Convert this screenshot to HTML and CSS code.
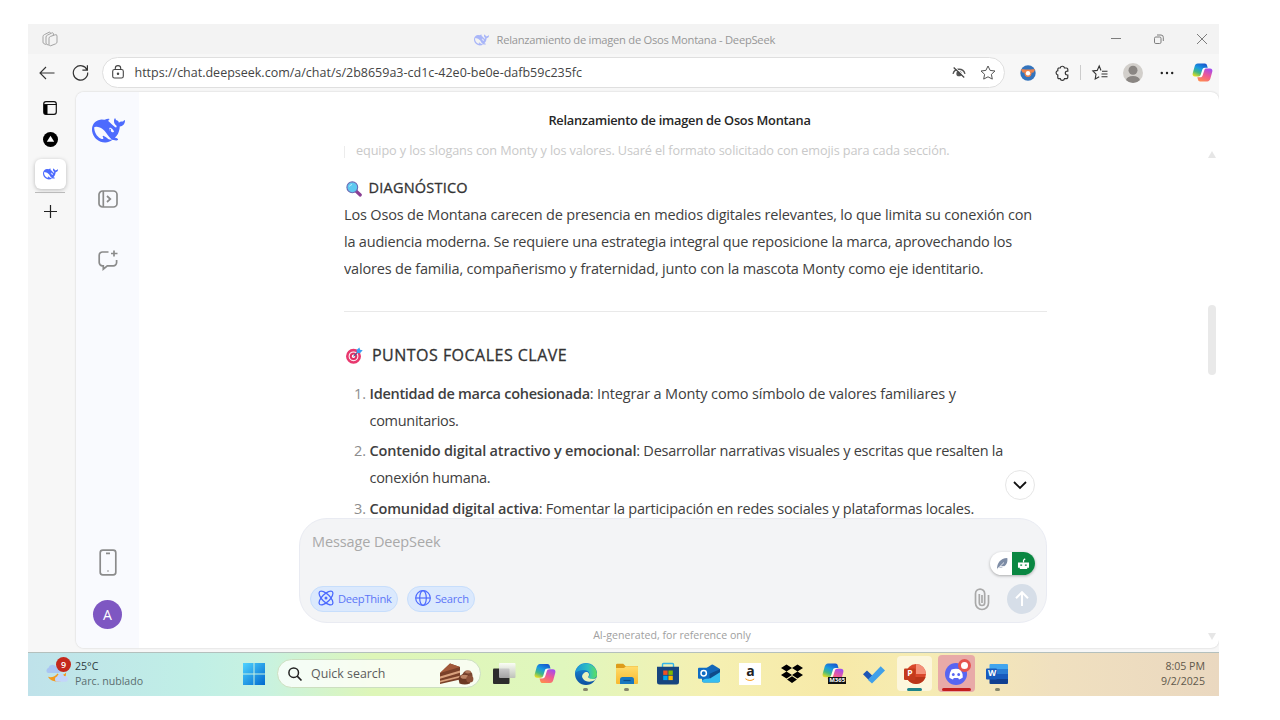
FILE: index.html
```html
<!DOCTYPE html>
<html lang="es">
<head>
<meta charset="utf-8">
<title>Relanzamiento de imagen de Osos Montana - DeepSeek</title>
<link rel="stylesheet" href="styles.css">
</head>
<body>
<svg class="defs" aria-hidden="true">
  <defs>
    <linearGradient id="cpBlue" x1=".7" y1="0" x2=".2" y2="1"><stop offset="0" stop-color="#1759cf"/><stop offset=".4" stop-color="#1a9be0"/><stop offset=".7" stop-color="#42b883"/><stop offset="1" stop-color="#e6dc20"/></linearGradient>
    <linearGradient id="cpPink" x1=".8" y1="0" x2=".3" y2="1"><stop offset="0" stop-color="#a04cf2"/><stop offset=".5" stop-color="#ee5a94"/><stop offset="1" stop-color="#ff8a50"/></linearGradient>
    <linearGradient id="win" x1="0" y1="0" x2="1" y2="1"><stop offset="0" stop-color="#4fd3ff"/><stop offset="1" stop-color="#0069cf"/></linearGradient>
    <linearGradient id="edgeA" x1="0" y1="0" x2="1" y2="0"><stop offset="0" stop-color="#1a94d8"/><stop offset=".6" stop-color="#2fc0c0"/><stop offset="1" stop-color="#5ee05a"/></linearGradient>
    <linearGradient id="edgeB" x1="0" y1="0" x2="0" y2="1"><stop offset="0" stop-color="#1c8fdc"/><stop offset="1" stop-color="#0c4fa0"/></linearGradient>
    <linearGradient id="folder" x1="0" y1="0" x2="0" y2="1"><stop offset="0" stop-color="#ffdc6c"/><stop offset="1" stop-color="#f9b92e"/></linearGradient>
    <linearGradient id="tvw" x1="0" y1="0" x2="0" y2="1"><stop offset="0" stop-color="#fff"/><stop offset="1" stop-color="#b8b8b8"/></linearGradient>
  </defs>
  <symbol id="whale" viewBox="0 3 24 18"><path fill-rule="evenodd" d="M23.748 4.482c-.254-.124-.364.113-.512.234-.051.039-.094.09-.137.136-.372.397-.806.657-1.373.626-.829-.046-1.537.214-2.163.848-.133-.782-.575-1.248-1.247-1.548-.352-.156-.708-.311-.955-.65-.172-.241-.219-.51-.305-.774-.055-.16-.11-.323-.293-.35-.2-.031-.278.136-.356.276-.313.572-.434 1.202-.422 1.84.027 1.436.633 2.58 1.838 3.393.137.093.172.187.129.323-.082.28-.18.552-.266.833-.055.179-.137.217-.329.14a5.526 5.526 0 01-1.736-1.18c-.857-.828-1.631-1.742-2.597-2.458a11.365 11.365 0 00-.689-.471c-.985-.957.13-1.743.388-1.836.27-.098.093-.432-.779-.428-.872.004-1.67.295-2.687.684a3.055 3.055 0 01-.465.137 9.597 9.597 0 00-2.883-.102c-1.885.21-3.39 1.102-4.497 2.623C.082 8.606-.231 10.684.152 12.85c.403 2.284 1.569 4.175 3.36 5.653 1.858 1.533 3.997 2.284 6.438 2.14 1.482-.085 3.133-.284 4.994-1.86.47.234.962.327 1.78.397.63.059 1.236-.03 1.705-.128.735-.156.684-.837.419-.961-2.155-1.004-1.682-.595-2.113-.926 1.096-1.296 2.746-2.642 3.392-7.003.05-.347.007-.565 0-.845-.004-.17.035-.237.23-.256a4.173 4.173 0 001.545-.475c1.396-.763 1.96-2.015 2.093-3.517.02-.23-.004-.467-.247-.588zM11.581 18c-2.089-1.642-3.102-2.183-3.52-2.16-.392.024-.321.471-.235.763.09.288.207.486.371.739.114.167.192.416-.113.603-.673.416-1.842-.14-1.897-.167-1.361-.802-2.5-1.86-3.301-3.307-.774-1.393-1.224-2.887-1.298-4.482-.02-.386.093-.522.477-.592a4.696 4.696 0 011.529-.039c2.132.312 3.946 1.265 5.468 2.774.868.86 1.525 1.887 2.202 2.891.72 1.066 1.494 2.082 2.48 2.914.348.292.625.514.891.677-.802.09-2.14.11-3.054-.614zm1-6.44a.306.306 0 01.415-.287.302.302 0 01.2.288.306.306 0 01-.31.307.303.303 0 01-.304-.308zm3.11 1.596c-.2.081-.399.151-.59.16a1.245 1.245 0 01-.798-.254c-.274-.23-.47-.358-.552-.758a1.73 1.73 0 01.016-.588c.07-.327-.008-.537-.239-.727-.187-.156-.426-.199-.688-.199a.559.559 0 01-.254-.078c-.11-.054-.2-.19-.114-.358.028-.054.16-.186.192-.21.356-.202.767-.136 1.146.016.352.144.618.408 1.001.782.391.451.462.576.685.914.176.265.336.537.445.848.067.195-.019.354-.25.452z"/></symbol>
  <symbol id="copilot" viewBox="0 0 22 20"><path fill="#fff" opacity=".8" d="M9 5h7l-3 10H6z"/><path fill="url(#cpPink)" d="M16 19.500H8.500c-1.300 0-1.900-.8-2.200-1.800L5.500 15h3c1.600 0 2.300-.8 2.800-2.400l1.500-4.800c.4-1.300 1-2 2.400-2h3.600c2.200 0 3 1.500 2.500 3.400l-2 7.200c-.5 1.700-1.600 3.100-3.300 3.100z"/><path fill="url(#cpBlue)" d="M6 .5h7.500c1.300 0 1.900.8 2.200 1.800l.8 2.700h-3c-1.600 0-2.300.8-2.800 2.400l-1.500 4.800c-.4 1.300-1 2-2.400 2H3.200c-2.200 0-3-1.500-2.500-3.400l2-7.200C3.200 1.900 4.300.5 6 .5z"/></symbol>
</svg>

<div class="window">
  <header class="titlebar">
    <svg class="i-tabs" viewBox="0 0 16 16"><g fill="#f3f3f3" stroke="#a3a3a3" stroke-width="1"><path d="M1 5.500a2 2 0 0 1 1.300-1.800L7 1.300a1 1 0 0 1 1.500 1v7l-5 4.200L2 12.600a1.500 1.500 0 0 1-1-1.500z"/><path d="M4 6a2 2 0 0 1 1.300-1.800L9.800 2a1 1 0 0 1 1.600 1v7.500l-5 3.500-1.400-.5a1.500 1.500 0 0 1-1-1.500z"/><path d="M7 7.200A2 2 0 0 1 8.300 5.500l4.800-1.700a1.400 1.400 0 0 1 1.900 1.300v6a2 2 0 0 1-1.300 1.700l-4.800 1.900A1.400 1.400 0 0 1 7 13.300z"/></g></svg>
    <div class="tab-title"><svg class="fav"><use href="#whale"/></svg><span>Relanzamiento de imagen de Osos Montana - DeepSeek</span></div>
    <div class="win-btns">
      <svg viewBox="0 0 12 12"><path d="M1 5.500h10"/></svg>
      <svg viewBox="0 0 12 12"><rect x="1.500" y="4" width="6.500" height="6.500" rx="1.300"/><path d="M4 2h4a2.300 2.300 0 0 1 2.300 2.300V8"/></svg>
      <svg viewBox="0 0 12 12"><path d="M1 1l10 10M11 1L1 11"/></svg>
    </div>
  </header>

  <div class="toolbar">
    <svg class="i-back" viewBox="0 0 16 14"><path d="M15.500 7H1M7 1L1 7l6 6"/></svg>
    <svg class="i-reload" viewBox="0 0 17 17"><path d="M15.200 6.200A7.200 7.200 0 1 0 15.700 8.500M15.400 1.200v5h-5"/></svg>
    <div class="address">
      <svg class="i-lock" viewBox="0 0 12 14"><rect x=".7" y="4.500" width="10.600" height="8.500" rx="1.800"/><path d="M3.300 4.500V3.300a2.700 2.700 0 0 1 5.400 0v1.200"/><circle cx="6" cy="8.800" r=".7" fill="#444"/></svg>
      <span class="url">https://chat.deepseek.com/a/chat/s/2b8659a3-cd1c-42e0-be0e-dafb59c235fc</span>
      <svg class="i-eye" viewBox="0 0 15 12"><path d="M1 7.500c1-3.700 3.500-5 6.500-5s5.500 1.300 6.500 5" fill="none" stroke="#555" stroke-width="1.500"/><circle cx="7.500" cy="7.300" r="2.900" fill="#555"/><path d="M3.300.7l10.500 10" stroke="#fff" stroke-width="1.200"/><path d="M1.700.5l11.500 11" stroke="#444" stroke-width="1.300"/></svg>
      <svg class="i-star" viewBox="0 0 16 15"><path d="M8 1l2.100 4.400 4.900.6-3.600 3.300.9 4.800L8 11.800l-4.300 2.300.9-4.800L1 6l4.900-.6z" fill="none" stroke="#555" stroke-linejoin="round"/></svg>
    </div>
    <svg class="i-ext" viewBox="0 0 16 16"><circle cx="8" cy="8" r="7.700" fill="#3474bd"/><path d="M.8 4.500C3 3.700 5 4.600 8 4.600s5-.9 7.200-.1l-2 3.300-1.700-.2a3.600 3.600 0 1 1-7 0l-1.700.2z" fill="#f0854c"/><circle cx="8" cy="8.200" r="2.200" fill="#fff"/></svg>
    <svg class="i-puzzle" viewBox="0 0 15 16"><path d="M3.500 3h1.700a2.200 2.200 0 0 1 4.300 0h1.800a1.500 1.500 0 0 1 1.500 1.500v1.700h-.6a1.900 1.900 0 0 0 0 3.800h.6v2.200a1.500 1.500 0 0 1-1.500 1.500H9.500a2.200 2.200 0 0 1-4.300 0H3.500A1.500 1.500 0 0 1 2.800 12v-2a2.200 2.200 0 0 1 0-4.300V4.500A1.500 1.500 0 0 1 3.500 3z" fill="none" stroke="#333" stroke-width="1.200"/></svg>
    <i class="sep"></i>
    <svg class="i-favs" viewBox="0 0 16 15"><path d="M9 5.500L7.200 1 5.200 5.400.8 6l3.200 3.200-.8 4.800 4-2.200M10 6.300h5.500M9.500 9h6M9.500 11.700h6" fill="none" stroke="#333" stroke-width="1.100"/></svg>
    <svg class="i-user" viewBox="0 0 20 20"><clipPath id="uc"><circle cx="10" cy="10" r="10"/></clipPath><g clip-path="url(#uc)"><rect width="20" height="20" fill="#d2cfcb"/><circle cx="10" cy="7.300" r="4.500" fill="#8a8683"/><ellipse cx="10" cy="17.500" rx="7" ry="4.500" fill="#8a8683"/></g></svg>
    <svg class="i-dots" viewBox="0 0 14 4"><circle cx="1.800" cy="2" r="1.200"/><circle cx="7" cy="2" r="1.200"/><circle cx="12.200" cy="2" r="1.200"/></svg>
    <svg class="i-copilot"><use href="#copilot"/></svg>
  </div>

  <div class="body">
    <nav class="vtabs">
      <svg class="v-panel" viewBox="0 0 14 14"><rect x=".7" y=".7" width="12.600" height="12.600" rx="2.300" fill="none" stroke="#111" stroke-width="1.200"/><path d="M1 3.500h12.500" stroke="#111"/><path d="M1 4h3.500v9.300H2.500A1.500 1.500 0 0 1 1 12z"/></svg>
      <svg class="v-tri" viewBox="0 0 15 15"><circle cx="7.500" cy="7.500" r="7.500"/><path d="M7.500 3.800l3.700 6H3.800z" fill="#fff"/></svg>
      <div class="v-active"><svg><use href="#whale"/></svg></div>
      <i class="v-line"></i>
      <svg class="v-plus" viewBox="0 0 13 13"><path d="M6.500 0v13M0 6.500h13" stroke="#222" stroke-width="1.200"/></svg>
    </nav>

    <div class="page">
      <aside class="side">
        <svg class="s-logo"><use href="#whale"/></svg>
        <svg class="s-open" viewBox="0 0 20 18"><rect x="1" y="1" width="18" height="16" rx="3.600"/><path d="M5.300 1v16M9 6l3.300 3L9 12"/></svg>
        <svg class="s-new" viewBox="0 0 20 20"><path d="M10.500 2H4.500A3.300 3.300 0 0 0 1.200 5.300v7.200a3.300 3.300 0 0 0 3.300 3.300h.8v3.400l4-3.400h6a3.300 3.300 0 0 0 3.300-3.300V10M16 .5v6M13 3.500h6.500"/></svg>
        <svg class="s-phone" viewBox="0 0 18 27"><rect x="1.200" y="1.200" width="15.600" height="24.600" rx="2.600"/><path d="M7 4.300h4M8.400 22h1.200"/></svg>
        <div class="avatar">A</div>
      </aside>

      <main class="chat">
        <h1>Relanzamiento de imagen de Osos Montana</h1>
        <section class="thread">
          <p class="quote"><span class="t-quote">equipo y los slogans con Monty y los valores. Usaré el formato solicitado con emojis para cada sección.</span></p>
          <h4><svg class="e-lens" viewBox="0 0 16 16"><path d="M10 10l4.300 4" stroke="#8b3f93" stroke-width="3.200" stroke-linecap="round"/><circle cx="6.300" cy="6.300" r="5.400" fill="#5fc9f0" stroke="#6a6ab4" stroke-width="1.100"/><path d="M3.500 5.500a3 3 0 0 1 2.500-2" stroke="#c4f0ff" fill="none"/></svg><span>DIAGNÓSTICO</span></h4>
          <p class="para"><span class="p1">Los Osos de Montana carecen de presencia en medios digitales relevantes, lo que limita su conexión con</span><br><span class="p2">la audiencia moderna. Se requiere una estrategia integral que reposicione la marca, aprovechando los</span><br><span class="p3">valores de familia, compañerismo y fraternidad, junto con la mascota Monty como eje identitario.</span></p>
          <hr>
          <h3><svg class="e-target" viewBox="0 0 17 17"><circle cx="7.500" cy="9.300" r="6.200" fill="#fff" stroke="#e8386e" stroke-width="2.600"/><circle cx="7.500" cy="9.300" r="4.300" fill="#f3c6d8"/><circle cx="7.500" cy="9.300" r="2.700" fill="#fff" stroke="#e02d62" stroke-width="1.900"/><path d="M7.500 9.300l5-5" stroke="#3d5a98" stroke-width="1.100"/><path d="M11 5.800L10.500 3 13.400.4l.7 2.300 2.600.6-2.700 3z" fill="#3aa0f0"/></svg><span>PUNTOS FOCALES CLAVE</span></h3>
          <ol>
            <li><i>1.</i><div><b class="b1">Identidad de marca cohesionada</b><span class="l1">: Integrar a Monty como símbolo de valores familiares y</span><br><span class="l1b">comunitarios.</span></div></li>
            <li><i>2.</i><div><b class="b2">Contenido digital atractivo y emocional</b><span class="l2">: Desarrollar narrativas visuales y escritas que resalten la</span><br><span class="l2b">conexión humana.</span></div></li>
            <li><i>3.</i><div><b class="b3">Comunidad digital activa</b><span class="l3">: Fomentar la participación en redes sociales y plataformas locales.</span></div></li>
          </ol>
        </section>
        <section class="composer">
          <div class="placeholder"><span>Message DeepSeek</span></div>
          <div class="actions">
            <button class="pill think"><svg viewBox="0 0 16 16"><g fill="none" stroke="#4d6bfe" stroke-width="1.300"><ellipse cx="8" cy="8" rx="9" ry="3.900" transform="rotate(45 8 8)"/><ellipse cx="8" cy="8" rx="9" ry="3.900" transform="rotate(-45 8 8)"/></g><circle cx="8" cy="8" r="1.500" fill="#4d6bfe"/></svg><span>DeepThink</span></button>
            <button class="pill find"><svg viewBox="0 0 16 16"><g fill="none" stroke="#4d6bfe" stroke-width="1.200"><circle cx="8" cy="8" r="7.300"/><ellipse cx="8" cy="8" rx="3.300" ry="7.300"/><path d="M.7 8h14.600"/></g></svg><span>Search</span></button>
            <svg class="clip" viewBox="0 0 16 22"><path d="M5.300 6v8.800a2.700 2.700 0 0 0 5.400 0V5.700a4.500 4.500 0 0 0-9.200 0v9.300a6.500 6.500 0 0 0 13 0V7M8 7v8"/></svg>
            <svg class="send" viewBox="0 0 30 30"><circle cx="15" cy="15" r="15" fill="#d6dee8"/><path d="M15 22V8.500M9 14.200l6-6 6 6" fill="none" stroke="#fff" stroke-width="2"/></svg>
          </div>
          <div class="helper"><svg class="feather" viewBox="0 0 12 13"><path d="M1 12.500C1 6 4 1.500 11.300 1c.6 4-.8 7.500-4.300 9-1.500.7-3 .6-4.500.5z" fill="#7d8ca5"/><path d="M.7 12.700L8 5.500M4 9.500h4" stroke="#fff" stroke-width=".8"/></svg><span class="bot"><svg viewBox="0 0 14 13"><path d="M1 5h12v5.500h-2V12H3v-1.500H1z" fill="#fff"/><path d="M7 5V2.500L8.800.8" stroke="#fff" stroke-width="1.300" fill="none"/><path d="M3.500 7h2v1.500h-2zM8.500 7h2v1.500h-2z" fill="#0a8742"/></svg></span></div>
        </section>
        <p class="note"><span>AI-generated, for reference only</span></p>
        <div class="down"><svg viewBox="0 0 14 8"><path d="M1 1l6 6 6-6" fill="none" stroke="#111" stroke-width="1.800"/></svg></div>
        <div class="scroll"><b class="up"></b><b class="thumb"></b><b class="dn"></b></div>
      </main>
    </div>
  </div>

  <footer class="taskbar">
    <div class="weather">
      <div class="w-icon"><svg viewBox="0 0 24 24"><path d="M12 12c3 3 6 2 9-1 0 7-4 9.500-9 9.500-4 0-8-1.500-10-5 4 1 8-.5 10-3.500z" fill="#f39a1e"/><path d="M2 11.500a3 3 0 0 1 .6-5.500 4.500 4.500 0 0 1 8.400-.5c3 0 4 2 4 3.500s-1 2.500-2.500 2.500z" fill="#a9c5f3"/><path d="M11 20.500a2.800 2.800 0 0 1 .5-5.300 4 4 0 0 1 7.500-.7c3 0 4 1.700 4 3.200s-1 2.800-2.500 2.800z" fill="#c3d6fa"/></svg><span class="nine">9</span></div>
      <div class="w-text"><span>25°C</span><span class="sub">Parc. nublado</span></div>
    </div>
    <svg class="start" viewBox="0 0 22 22"><path fill="url(#win)" d="M0 0h10.500v10.500H0zM11.500 0H22v10.500H11.500zM0 11.500h10.500V22H0zM11.500 11.500H22V22H11.500z"/></svg>
    <div class="search">
      <svg class="mag" viewBox="0 0 14 14"><circle cx="5.700" cy="5.700" r="4.800" fill="none" stroke="#222" stroke-width="1.500"/><path d="M9.200 9.200l4.300 4.300" stroke="#222" stroke-width="1.700"/></svg>
      <span>Quick search</span>
      <svg class="cake" viewBox="0 0 34 22"><path d="M0 10L10 .5 20 4v12.500L0 21z" fill="#7a4029"/><path d="M0 10L10 .5 20 4z" fill="#a2593a"/><path d="M0 13.500L20 7.500v2.200L0 15.700zM0 17.800l20-5v1.700L0 19.500z" fill="#d9a17d"/><circle cx="27.500" cy="12.500" r="5" fill="#7b4630"/><path d="M18.500 16a6.200 5 0 0 1 12.400 0l-1 4.500q-5 2-10.400 0z" fill="#6b3823"/><ellipse cx="24.500" cy="13.800" rx="4" ry="2" fill="#bd8464"/><circle cx="29.800" cy="16" r="3.600" fill="#8d5138"/><ellipse cx="28" cy="9" rx="3" ry="1.400" fill="#b0775a"/></svg>
    </div>
    <div class="apps">
      <div class="app"><svg viewBox="0 0 22 22"><rect x="0" y="5.500" width="16.500" height="15.500" rx="1" fill="#2c2c2c"/><rect x="6" y="0" width="16.500" height="15" rx="1" fill="url(#tvw)" opacity=".85"/></svg></div>
      <div class="app"><svg viewBox="0 0 22 22"><use href="#copilot" width="22" height="21"/></svg></div>
      <div class="app"><svg viewBox="0 0 22 22"><circle cx="11" cy="11" r="11" fill="url(#edgeB)"/><path d="M.2 9.500A11 11 0 0 1 22 11c0 3.500-2.500 5-5 5-2.300 0-4-.8-3-2.500 1.500-2.700 0-6.500-5-6.500-4 0-7.500 1.500-8.800 2.500z" fill="url(#edgeA)"/><path d="M8.500 10.500a4 4 0 0 0-.3 5.500c2.500 3.300 7.500 3.300 11.800 1.300l1.200-2.300c-2 1.300-5 1.300-7 .2-1.200-.6-1-1.500-.5-2.300.7-1.400.3-2.700-.7-3.400-1.500-.9-3.500-.2-4.500 1z" fill="#eaf3be"/></svg><i class="dot"></i></div>
      <div class="app"><svg viewBox="0 0 22 22"><path d="M0 2a1.200 1.200 0 0 1 1.200-1.200h6L9.500 3H21a1 1 0 0 1 1 1v3H0z" fill="#dd9c1a"/><path d="M0 5h8l2-1.800h11a1 1 0 0 1 1 1V20a1 1 0 0 1-1 1H1a1 1 0 0 1-1-1z" fill="url(#folder)"/><path d="M4 21v-4.500A2.500 2.500 0 0 1 6.500 14h9a2.500 2.500 0 0 1 2.500 2.500V21z" fill="#1977bf"/><path d="M7.500 17.500h7" stroke="#0b4b88" stroke-width="1.200"/></svg><i class="dot"></i></div>
      <div class="app"><svg viewBox="0 0 22 22"><path d="M5.500 5V1.500a1 1 0 0 1 1-1h9a1 1 0 0 1 1 1V5" fill="none" stroke="#33b5ea" stroke-width="1.400"/><path d="M0 3.800h22V19a2.500 2.500 0 0 1-2.500 2.500h-17A2.500 2.500 0 0 1 0 19z" fill="#17457f"/><path d="M6.200 7.500h4.400v4.400H6.200z" fill="#f25022"/><path d="M11.400 7.500h4.400v4.400h-4.400z" fill="#7fba00"/><path d="M6.200 12.700h4.400v4.400H6.200z" fill="#00a4ef"/><path d="M11.400 12.700h4.400v4.400h-4.400z" fill="#ffb900"/></svg></div>
      <div class="app"><svg viewBox="0 0 22 22"><path d="M4 8L13.500 1.800Q14.500 1.300 15.500 1.900L22 6v11.500a2 2 0 0 1-2 2H6a2 2 0 0 1-2-2z" fill="#1468b8"/><path d="M22 7.500v10a2 2 0 0 1-2 2H6a2 2 0 0 1-2-2L14 12z" fill="#36bdf0"/><path d="M22 6.300v3L12 15.500l-4-3L15.500 9z" fill="#0f4a8a"/><rect y="4.800" width="11.500" height="11" rx="1" fill="#0f6cc4"/><circle cx="5.700" cy="10.300" r="2.700" fill="none" stroke="#fff" stroke-width="1.500"/></svg></div>
      <div class="app"><div class="amazon"><span>a</span><svg viewBox="0 0 12 4"><path d="M.5.5Q6 4.500 11 .8" fill="none" stroke="#f79a1b" stroke-width="1.200"/></svg></div></div>
      <div class="app"><svg viewBox="0 0 22 22"><path d="M5.500 1.500L11 5 5.500 8.500 0 5zM16.500 1.500L22 5l-5.500 3.500L11 5zM5.500 8.500L11 12l-5.500 3.500L0 12zM16.500 8.500L22 12l-5.500 3.500L11 12zM11 13.300l5 3.300-5 3.400-5-3.400z"/></svg></div>
      <div class="app"><svg viewBox="0 0 22 22"><use href="#copilot" width="22" height="20"/></svg><span class="m365">M365</span></div>
      <div class="app"><svg viewBox="0 0 22 22"><path d="M0 11.300L4 7.400l5.500 5.400-4 4z" fill="#1c56b5"/><path d="M4.800 16.700L17.700 3.200 22 7.500 9 20.500z" fill="#3fa0ea"/></svg></div>
      <div class="app sel"><svg viewBox="0 0 22 22"><circle cx="12" cy="11" r="10" fill="#d9472b"/><path d="M12 1a10 10 0 0 1 10 10H12z" fill="#f4917a"/><path d="M2.500 14h19a10 10 0 0 1-19 0z" fill="#b93519"/><rect y="5.500" width="11.500" height="11.500" rx="1" fill="#c43a1c"/></svg><span class="ppt">P</span><i class="bar teal"></i></div>
      <div class="app alert"><svg viewBox="0 0 22 22"><circle cx="11" cy="11" r="11" fill="#5865f2"/><path d="M6.500 6.500q4.500-1.700 9 0 2.500 4 2.300 8-2 1.700-3.800 2l-.8-1.500h-4.400L8 16.500q-2-.3-3.800-2 0-4.300 2.300-8z" fill="#fff"/><ellipse cx="8.300" cy="11.500" rx="1.400" ry="1.600" fill="#5865f2"/><ellipse cx="13.700" cy="11.500" rx="1.400" ry="1.600" fill="#5865f2"/></svg><span class="ping"></span><i class="bar red"></i></div>
      <div class="app"><svg viewBox="0 0 22 22"><path d="M3.500 2a1 1 0 0 1 1-1H21a1 1 0 0 1 1 1v4H3.500z" fill="#41a5ee"/><path d="M3.500 6H22v5H3.500z" fill="#2b7cd3"/><path d="M3.500 11H22v5H3.500z" fill="#185abd"/><path d="M3.500 16H22v4a1 1 0 0 1-1 1H4.500a1 1 0 0 1-1-1z" fill="#103f91"/><rect y="5.500" width="11" height="11" rx="1" fill="#185abd"/></svg><span class="word">W</span><i class="dot"></i></div>
    </div>
    <div class="clock"><span>8:05 PM</span><span>9/2/2025</span></div>
  </footer>
</div>
</body>
</html>
```
FILE: styles.css
```css
* { box-sizing: border-box; }
body {
  margin: 0;
  width: 1280px;
  height: 720px;
  padding: 24px 0 0 28px;
  overflow: hidden;
  background: #fff;
  font-family: "Open Sans", "Noto Sans", sans-serif;
  color: #404040;
}
svg { display: block; flex: none; overflow: visible; }
.defs { position: absolute; width: 0; height: 0; }
h1, h3, h4, p, ol { margin: 0; padding: 0; }
i { font-style: normal; }
span, b { white-space: nowrap; }

.window { width: 1191px; height: 672px; display: flex; flex-direction: column; background: #f7f7f7; overflow: hidden; }

/* title bar */
.titlebar { height: 30px; flex: none; display: flex; align-items: center; background: #f3f3f3; padding: 0 11.500px 0 14px; }
.i-tabs { width: 16px; height: 16px; }
.tab-title { display: flex; align-items: center; gap: 7.500px; margin-left: 416px; padding-top: 1px; font-size: 11.200px; letter-spacing: -.26px; color: #979797; }
.fav { width: 15px; height: 12px; fill: #a9b6f8; }
.win-btns { margin-left: auto; display: flex; gap: 31px; }
.win-btns svg { width: 12px; height: 12px; fill: none; stroke: #7d7d7d; stroke-width: 1; }

/* toolbar */
.toolbar { height: 37px; flex: none; display: flex; align-items: center; padding: 0 6px 0 11px; }
.i-back { width: 16px; height: 14px; fill: none; stroke: #333; stroke-width: 1.1; }
.i-reload { width: 17px; height: 17px; margin-left: 17px; fill: none; stroke: #333; stroke-width: 1.2; }
.address { width: 903px; height: 31px; margin-left: 13px; border: 1.500px solid #dfdfdf; border-radius: 16px; background: #fff; display: flex; align-items: center; padding: 0 8px 0 8.500px; }
.i-lock { width: 12px; height: 14px; margin-top: -1px; fill: none; stroke: #444; stroke-width: 1.1; }
.url { margin-left: 11px; font-size: 12.500px; color: #444; }
.i-eye { width: 14px; height: 11px; margin-left: auto; }
.i-star { width: 16px; height: 15px; margin-left: 14px; }
.i-ext { width: 16px; height: 16px; margin-left: 15px; }
.i-puzzle { width: 15px; height: 16px; margin-left: 19px; }
.sep { width: 1px; height: 15px; background: #ccc; margin-left: 10px; }
.i-favs { width: 16px; height: 15px; margin-left: 11px; }
.i-user { width: 20px; height: 20px; margin-left: 15px; }
.i-dots { width: 14px; height: 4px; margin-left: 17px; fill: #222; }
.i-copilot { width: 21px; height: 19px; margin-left: auto; }

/* browser body */
.body { height: 561px; flex: none; display: flex; }
.vtabs { width: 47px; display: flex; flex-direction: column; align-items: center; padding: 10px 3px 0 0; }
.v-panel { width: 14px; height: 14px; }
.v-tri { width: 15px; height: 15px; margin-top: 17px; }
.v-active { width: 31px; height: 30px; margin-top: 11.500px; border-radius: 6px; background: #fff; box-shadow: 0 1px 4px rgba(0,0,0,.25); display: grid; place-items: center; }
.v-active svg { width: 15px; height: 12px; fill: #4d6bfe; }
.v-line { width: 30px; height: 1px; background: #bbb; margin-top: 3.500px; }
.v-plus { width: 13px; height: 13px; margin-top: 12px; }

.page { flex: 1; height: 556px; margin: 1px 0 0 1px; background: #fff; border-radius: 8px; box-shadow: 0 0 2px rgba(0,0,0,.2); display: flex; overflow: hidden; }
.side { width: 63px; background: #f9fafe; display: flex; flex-direction: column; align-items: center; padding-top: 26px; }
.s-logo { width: 33px; height: 25px; margin-left: 2px; fill: #4d6bfe; }
.side svg:not(.s-logo) { fill: none; stroke: #8b8b8b; stroke-width: 1.700; }
.s-open { width: 20px; height: 18px; margin-top: 47px; }
.s-new { width: 20px; height: 20px; margin-top: 42px; }
.s-phone { width: 18px; height: 27px; margin-top: 279px; }
.avatar { width: 29px; height: 29px; margin-top: 24px; border-radius: 50%; background: #7e57c2; color: #fff; font-size: 14px; line-height: 29px; text-align: center; }

.chat { flex: 1; position: relative; }
h1 { height: 46px; padding: 18px 0 0 1px; font-size: 12.800px; line-height: 20px; font-weight: 600; letter-spacing: -.24px; text-align: center; color: #262626; }
.thread { height: 380px; width: 703px; margin-left: 205px; overflow: hidden; font-size: 14.500px; line-height: 26.700px; }
.quote { height: 27px; padding-left: 12px; font-size: 12.700px; line-height: 25.500px; letter-spacing: -.117px; color: #c9c9c9; background: linear-gradient(#ececec, #ececec) 0 8px / 1px 12px no-repeat; }
h4, h3 { display: flex; align-items: center; height: 27px; font-weight: 500; color: #333; -webkit-text-stroke: .3px #333; }
h4 { margin-top: 10px; font-size: 14.500px; letter-spacing: .22px; }
.e-lens { width: 16px; height: 16px; margin: 0 6.500px 0 2px; }
.para { padding-top: .4px; }
.p1 { letter-spacing: -.17px; }
.p2 { letter-spacing: -.21px; }
.p3 { letter-spacing: -.177px; }
hr { height: 1px; border: 0; background: #e9e9e9; margin: 28.600px 0 30px; }
h3 { font-size: 16px; letter-spacing: .48px; }
.e-target { width: 17px; height: 17px; margin: 0 9px 0 2px; }
ol { list-style: none; margin-top: 12px; display: grid; row-gap: 3.800px; }
li { display: flex; }
li i { width: 25.500px; padding-left: 10px; color: #8d8d8d; flex: none; }
li b { font-weight: 600; }
.b1 { letter-spacing: -.28px; }
.l1 { letter-spacing: -.145px; }
.l1b, .l2b { letter-spacing: -.28px; }
.b2 { letter-spacing: -.18px; }
.l2 { letter-spacing: -.26px; }
.b3 { letter-spacing: -.17px; }
.l3 { letter-spacing: -.21px; }

.composer { position: relative; width: 748px; height: 105px; margin-left: 160px; border: 1px solid #e9ebf2; border-radius: 28px; background: #f3f4f6; padding: 10px 9px 0 10px; }
.placeholder { font-size: 14.500px; line-height: 26px; padding-left: 2px; letter-spacing: -.12px; color: #a9a9a9; }
.actions { display: flex; align-items: center; margin-top: 29px; height: 30px; }
.pill { height: 26px; margin-top: -1px; border: 1px solid #c7defc; border-radius: 13px; background: #dbe9fd; color: #5b76f7; font: 11.200px "Open Sans", sans-serif; letter-spacing: -.28px; display: flex; align-items: center; gap: 4px; padding: 0 0 1px 7px; }
.think { width: 88px; }
.find { width: 68px; margin-left: 9px; }
.pill svg { width: 16px; height: 16px; }
.clip { width: 16px; height: 22px; margin-left: auto; fill: none; stroke: #a9a9a9; stroke-width: 1.700; }
.send { width: 30px; height: 30px; margin-left: 17px; }
.helper { position: absolute; right: 11px; top: 33px; width: 45px; height: 23px; border-radius: 12px; background: #fff; box-shadow: 0 1px 3px rgba(0,0,0,.3); display: flex; align-items: center; overflow: hidden; }
.feather { width: 12px; height: 13px; margin-left: 6px; }
.bot { width: 23px; height: 23px; margin-left: auto; background: #0a8742; display: grid; place-items: center; }
.bot svg { width: 13px; height: 12px; }
.note { margin-top: 5px; padding-right: 14px; font-size: 10.600px; line-height: 15px; letter-spacing: .01px; text-align: center; color: #a0a0a0; }
.down { position: absolute; left: 866px; top: 378px; width: 30px; height: 30px; border: 1px solid #e6e6e6; border-radius: 50%; background: #fff; display: grid; place-items: center; }
.down svg { width: 14px; height: 8px; }
.scroll { position: absolute; right: 2.500px; top: 59px; width: 9px; height: 489px; display: flex; flex-direction: column; align-items: center; }
.up { border: 4.500px solid transparent; border-top: 0; border-bottom: 7px solid #e6e6e6; }
.thumb { width: 8px; height: 70px; margin-top: 147px; border-radius: 4px; background: #e9e9e9; }
.dn { margin-top: auto; border: 4.500px solid transparent; border-bottom: 0; border-top: 7px solid #e6e6e6; }

/* taskbar */
.taskbar { height: 44px; flex: none; display: flex; align-items: center; padding-bottom: 2px; border-top: 1px solid #b4c0bd; background: linear-gradient(90deg, #bfe2ea 0%, #c0efe6 14%, #c8f2e0 20%, #def6b8 29%, #e0f7bd 45%, #f5f0b2 57%, #f7e9a8 68%, #f6ecb3 75%, #f0e0bf 86%, #ead8c0 100%); }
.weather { display: flex; width: 214.500px; padding-left: 18px; }
.w-icon { position: relative; width: 24px; height: 24px; margin-top: 3px; }
.w-icon svg { width: 23px; height: 23px; }
.nine { position: absolute; left: 10px; top: -5px; width: 15px; height: 15px; border-radius: 50%; background: #c4281c; color: #fff; font-size: 9px; font-weight: 600; line-height: 15px; text-align: center; }
.w-text { display: flex; flex-direction: column; margin-left: 5px; font-size: 10.600px; line-height: 15px; color: #2d3b3d; }
.sub { color: #5b6e70; }
.start { width: 22px; height: 22px; }
.search { width: 204px; height: 29px; margin-left: 12.500px; border: 1px solid #ccdfc0; border-radius: 15px; background: rgba(255,255,255,.78); display: flex; align-items: center; padding: 0 6px 0 10px; font-size: 12.400px; color: #5c5c5c; }
.mag { width: 14px; height: 14px; margin-right: 9px; }
.cake { width: 34px; height: 22px; margin-left: auto; }
.apps { display: grid; grid-template-columns: repeat(13, 41.150px); margin-left: 2px; }
.app { position: relative; height: 41px; display: grid; place-items: center; }
.app svg { position: relative; width: 22px; height: 22px; }
.dot { position: absolute; left: 18px; bottom: 3px; width: 5px; height: 3px; border-radius: 2px; background: #85856b; }
.amazon { width: 22px; height: 22px; background: #fff; display: flex; flex-direction: column; align-items: center; font: bold 14px/15px "Open Sans", sans-serif; color: #222; }
.app .amazon svg { width: 10px; height: 4px; margin-top: 0; }
.m365 { position: absolute; left: 16px; top: 24px; height: 7px; padding: 0 1px; background: #111; color: #fff; font-size: 6px; line-height: 7px; font-weight: 700; }
.sel::before, .alert::before { content: ""; position: absolute; left: 3px; top: 3px; width: 35px; height: 35px; border-radius: 4px; background: #fcf6dc; }
.alert::before { left: 2px; top: 2px; width: 37px; height: 37px; background: #e8aaa8; }
.ppt, .word { position: absolute; left: 10px; top: 14px; width: 11px; font-size: 8.500px; line-height: 12px; font-weight: 700; color: #fff; text-align: center; }
.bar { position: absolute; bottom: 3px; height: 3px; border-radius: 2px; }
.teal { left: 13px; width: 15px; background: #1d8389; }
.red { left: 6px; width: 29px; background: #c41e1e; }
.ping { position: absolute; right: 6px; top: 6px; width: 13px; height: 13px; border-radius: 50%; background: #fff; border: 3.500px solid #e5544f; }
.clock { margin-left: auto; padding-right: 14px; display: flex; flex-direction: column; align-items: flex-end; font-size: 10.600px; line-height: 15px; color: #5f584b; }
```
